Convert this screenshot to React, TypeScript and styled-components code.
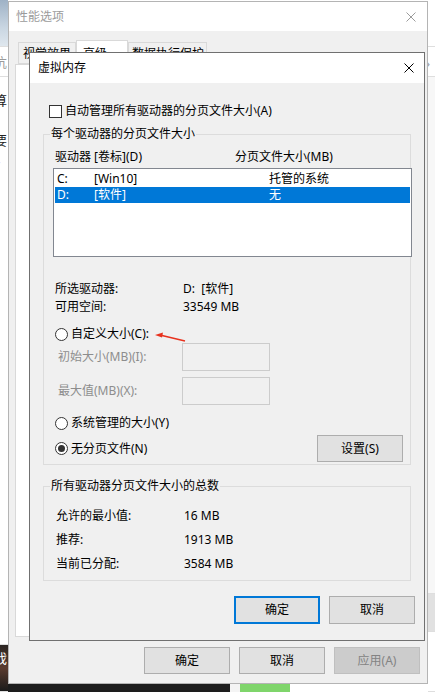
import styled, { createGlobalStyle } from "styled-components";

const GlobalStyle = createGlobalStyle`
  html, body {
    margin: 0;
    padding: 0;
    background: #ffffff;
  }
  body {
    font-family: "Noto Sans", "Noto Sans CJK SC", sans-serif;
    font-size: 12px;
    line-height: 16px;
    color: #000;
  }
  * {
    box-sizing: border-box;
  }
`;

const Desktop = styled.div`
  position: relative;
  width: 435px;
  height: 692px;
  overflow: hidden;
  display: flex;
`;

/* background apps peeking out around the windows */
const LeftStrip = styled.div`
  width: 8px;
  display: flex;
  flex-direction: column;
  overflow: hidden;
`;

const Middle = styled.div`
  flex: 1;
  display: flex;
  flex-direction: column;
`;

const RightStrip = styled.div`
  width: 7px;
  display: flex;
  flex-direction: column;
  overflow: hidden;
  background: #ffffff;
`;

const Segment = styled.div<{ $h?: number; $bg: string }>`
  height: ${(p) => (p.$h ? `${p.$h}px` : "auto")};
  flex: ${(p) => (p.$h ? "none" : 1)};
  background: ${(p) => p.$bg};
  border-bottom: 1px solid #dedede;
  position: relative;
`;

const Fragment = styled.div<{ $color?: string }>`
  margin-left: -6px;
  color: ${(p) => p.$color || "#222"};
  font-size: 13px;
  line-height: 14px;
  white-space: nowrap;
`;

const Chevron = styled.div`
  margin: 8px 0 0 -2px;
  color: #9a9a9a;
  font-size: 13px;
`;

const Taskbar = styled.div`
  margin-top: auto;
  height: 9px;
  display: flex;
`;

const Swatch = styled.div<{ $w?: number; $bg: string }>`
  width: ${(p) => (p.$w ? `${p.$w}px` : "auto")};
  flex: ${(p) => (p.$w ? "none" : 1)};
  background: ${(p) => p.$bg};
`;

/* 性能选项 window */
const PerfWindow = styled.div`
  position: absolute;
  left: 8px;
  top: 1px;
  width: 420px;
  height: 683px;
  border: 1px solid #b4b4b4;
  background: #f0f0f0;
  display: flex;
  flex-direction: column;
`;

const TitleBar = styled.div<{ $h: number; $pl: number; $pr: number; $muted?: boolean }>`
  height: ${(p) => p.$h}px;
  flex: none;
  background: #ffffff;
  display: flex;
  align-items: center;
  justify-content: space-between;
  padding: 0 ${(p) => p.$pr}px 0 ${(p) => p.$pl}px;
  color: ${(p) => (p.$muted ? "#9b9b9b" : "#000")};
  font-size: 12px;
`;

const TabRow = styled.div`
  margin-top: 9px;
  height: 24px;
  padding-left: 9px;
  display: flex;
  align-items: flex-end;
  position: relative;
  z-index: 1;
`;

const Tab = styled.div<{ $w: number; $pl: number; $active?: boolean }>`
  width: ${(p) => p.$w}px;
  height: ${(p) => (p.$active ? 25 : 22)}px;
  margin-bottom: ${(p) => (p.$active ? -1 : 0)}px;
  padding: ${(p) => (p.$active ? 5 : 3)}px 0 0 ${(p) => p.$pl}px;
  background: ${(p) => (p.$active ? "#ffffff" : "#f0f0f0")};
  border: 1px solid #d9d9d9;
  border-bottom: ${(p) => (p.$active ? "none" : "1px solid #d9d9d9")};
  white-space: nowrap;
`;

const TabPanel = styled.div`
  flex: 1;
  margin: 0 6px;
  background: #ffffff;
  border: 1px solid #d9d9d9;
`;

const ButtonRow = styled.div<{ $mt: number; $pr: number; $pb: number; $gap: number }>`
  display: flex;
  justify-content: flex-end;
  gap: ${(p) => p.$gap}px;
  margin-top: ${(p) => p.$mt}px;
  padding: 0 ${(p) => p.$pr}px ${(p) => p.$pb}px 0;
`;

const Button = styled.div<{ $h?: number; $primary?: boolean; $disabled?: boolean }>`
  width: 86px;
  height: ${(p) => p.$h || 28}px;
  display: flex;
  align-items: center;
  justify-content: center;
  background: ${(p) => (p.$disabled ? "#cccccc" : "#e1e1e1")};
  border: ${(p) =>
    p.$primary ? "2px solid #0078d7" : p.$disabled ? "1px solid #bfbfbf" : "1px solid #adadad"};
  color: ${(p) => (p.$disabled ? "#838383" : "#000")};
`;

/* 虚拟内存 dialog */
const Dialog = styled.div`
  position: absolute;
  left: 29px;
  top: 52px;
  width: 396px;
  height: 589px;
  border: 1px solid #707070;
  background: #f0f0f0;
  display: flex;
  flex-direction: column;
  z-index: 2;
`;

const Body = styled.div`
  flex: 1;
  display: flex;
  flex-direction: column;
`;

const CheckRow = styled.label`
  display: flex;
  align-items: center;
  gap: 3px;
  margin: 20px 0 0 19px;
  height: 16px;
`;

const CheckBox = styled.span`
  width: 13px;
  height: 13px;
  border: 1px solid #333333;
  background: #ffffff;
`;

const GroupBox = styled.div<{ $mt: number; $pb: number }>`
  margin: ${(p) => p.$mt}px 0 0 13px;
  width: 368px;
  border: 1px solid #dcdcdc;
  padding: 0 7px ${(p) => p.$pb}px 9px;
  display: flex;
  flex-direction: column;
`;

const Legend = styled.div`
  margin: -9px 0 0 -3px;
  padding: 0 1px;
  width: fit-content;
  background: #f0f0f0;
  line-height: 16px;
  white-space: nowrap;
`;

const HeaderRow = styled.div`
  display: flex;
  margin-top: 7px;
  padding-left: 2px;
`;

const Col = styled.span<{ $w?: number }>`
  width: ${(p) => (p.$w ? `${p.$w}px` : "auto")};
  flex: none;
  white-space: nowrap;
`;

const ListBox = styled.div`
  margin-top: 3px;
  width: 359px;
  height: 89px;
  border: 1px solid #828790;
  background: #ffffff;
  padding: 2px 1px;
`;

const ListRow = styled.div<{ $selected?: boolean }>`
  display: flex;
  height: 16px;
  padding-left: 2px;
  background: ${(p) => (p.$selected ? "#0078d7" : "transparent")};
  color: ${(p) => (p.$selected ? "#ffffff" : "#000")};
`;

const InfoList = styled.div<{ $mt: number; $pl: number; $lh: number }>`
  margin-top: ${(p) => p.$mt}px;
  padding-left: ${(p) => p.$pl}px;
  display: flex;
  flex-direction: column;
  line-height: ${(p) => p.$lh}px;
`;

const InfoRow = styled.div`
  display: flex;
`;

const RadioRow = styled.div<{ $mt: number }>`
  display: flex;
  align-items: center;
  gap: 3px;
  margin-top: ${(p) => p.$mt}px;
  padding-left: 2px;
  height: 16px;
`;

const Radio = styled.span<{ $checked?: boolean }>`
  width: 13px;
  height: 13px;
  border-radius: 50%;
  border: 1px solid #333333;
  background: #ffffff;
  display: flex;
  align-items: center;
  justify-content: center;

  &::after {
    content: "";
    display: ${(p) => (p.$checked ? "block" : "none")};
    width: 7px;
    height: 7px;
    border-radius: 50%;
    background: #333333;
  }
`;

const FieldRow = styled.div<{ $mt: number }>`
  display: flex;
  align-items: center;
  margin-top: ${(p) => p.$mt}px;
  padding-left: 5px;
  color: #8d8d8d;
`;

const FieldLabel = styled.span`
  width: 124px;
  white-space: nowrap;
`;

const TextField = styled.div`
  width: 88px;
  height: 28px;
  border: 1px solid #cccccc;
  background: #f0f0f0;
`;

const LastRow = styled.div`
  display: flex;
  align-items: center;
  justify-content: space-between;
  margin-top: 4px;
  height: 27px;
`;

const ArrowMark = styled.svg`
  position: absolute;
  left: 150px;
  top: 328px;
  z-index: 3;
`;

const CloseIcon = ({ color }: { color: string }) => (
  <svg width="10" height="10" viewBox="0 0 10 10">
    <path d="M0.5 0.5 L9.5 9.5 M9.5 0.5 L0.5 9.5" stroke={color} strokeWidth="1" fill="none" />
  </svg>
);

const drives = [
  { letter: "C:", label: "[Win10]", size: "托管的系统", selected: false },
  { letter: "D:", label: "[软件]", size: "无", selected: true },
];

const totals = [
  { k: "允许的最小值:", v: "16 MB" },
  { k: "推荐:", v: "1913 MB" },
  { k: "当前已分配:", v: "3584 MB" },
];

export default function App() {
  return (
    <>
      <GlobalStyle />
      <Desktop>
        <LeftStrip>
          <Segment $h={47} $bg="linear-gradient(180deg, #9fb2c6, #c9d6e2 60%, #dfe7ee)" />
          <Segment $h={30} $bg="#ffffff">
            <Fragment $color="#9a9a9a" style={{ marginTop: 8 }}>沆</Fragment>
          </Segment>
          <Segment $bg="#ffffff">
            <Fragment style={{ marginTop: 16 }}>算</Fragment>
            <Fragment style={{ marginTop: 26 }}>要</Fragment>
            <Fragment $color="#d98a2b" style={{ marginTop: 14 }}>亻</Fragment>
            <Fragment $color="#d98a2b" style={{ marginTop: 106 }}>/</Fragment>
            <Fragment $color="#d98a2b" style={{ marginTop: 118 }}>/</Fragment>
          </Segment>
          <Segment $h={47} $bg="linear-gradient(180deg, #2b2623, #5a3b2e 50%, #1b1b1b)">
            <Fragment $color="#ffffff" style={{ marginTop: 6 }}>戏</Fragment>
          </Segment>
        </LeftStrip>
        <Middle>
          <Taskbar>
            <Swatch $w={222} $bg="#1d1d1d" />
            <Swatch $w={10} $bg="#f4f4f4" />
            <Swatch $w={50} $bg="#7fd56b" />
            <Swatch $bg="#ffffff" />
          </Taskbar>
        </Middle>
        <RightStrip>
          <Segment $h={47} $bg="#ffffff" />
          <Segment $h={30} $bg="#ffffff">
            <Chevron>›</Chevron>
          </Segment>
          <Segment $h={517} $bg="#f7f7f7" />
          <Segment $h={38} $bg="#e1e1e1" />
          <Segment $bg="#ffffff" />
        </RightStrip>

        <PerfWindow>
          <TitleBar $h={29} $pl={7} $pr={11} $muted>
            <span>性能选项</span>
            <CloseIcon color="#9b9b9b" />
          </TitleBar>
          <TabRow>
            <Tab $w={58} $pl={4}>视觉效果</Tab>
            <Tab $w={52} $pl={6} $active>高级</Tab>
            <Tab $w={79} $pl={3}>数据执行保护</Tab>
          </TabRow>
          <TabPanel />
          <ButtonRow $mt={10} $pr={7} $pb={9} $gap={9}>
            <Button $h={27}>确定</Button>
            <Button $h={27}>取消</Button>
            <Button $h={27} $disabled>应用(A)</Button>
          </ButtonRow>
        </PerfWindow>

        <Dialog>
          <TitleBar $h={30} $pl={8} $pr={10}>
            <span>虚拟内存</span>
            <CloseIcon color="#000" />
          </TitleBar>
          <Body>
            <CheckRow>
              <CheckBox />
              <span>自动管理所有驱动器的分页文件大小(A)</span>
            </CheckRow>

            <GroupBox $mt={15} $pb={2}>
              <Legend>每个驱动器的分页文件大小</Legend>
              <HeaderRow>
                <Col $w={180}>驱动器 [卷标](D)</Col>
                <Col>分页文件大小(MB)</Col>
              </HeaderRow>
              <ListBox>
                {drives.map((d) => (
                  <ListRow key={d.letter} $selected={d.selected}>
                    <Col $w={37}>{d.letter}</Col>
                    <Col $w={175}>{d.label}</Col>
                    <Col>{d.size}</Col>
                  </ListRow>
                ))}
              </ListBox>

              <InfoList $mt={23} $pl={2} $lh={18}>
                <InfoRow>
                  <Col $w={128}>所选驱动器:</Col>
                  <Col>D:&nbsp;&nbsp;[软件]</Col>
                </InfoRow>
                <InfoRow>
                  <Col $w={128}>可用空间:</Col>
                  <Col>33549 MB</Col>
                </InfoRow>
              </InfoList>

              <RadioRow $mt={10}>
                <Radio />
                <span>自定义大小(C):</span>
              </RadioRow>
              <FieldRow $mt={1}>
                <FieldLabel>初始大小(MB)(I):</FieldLabel>
                <TextField />
              </FieldRow>
              <FieldRow $mt={6}>
                <FieldLabel>最大值(MB)(X):</FieldLabel>
                <TextField />
              </FieldRow>

              <RadioRow $mt={10}>
                <Radio />
                <span>系统管理的大小(Y)</span>
              </RadioRow>
              <LastRow>
                <RadioRow $mt={0}>
                  <Radio $checked />
                  <span>无分页文件(N)</span>
                </RadioRow>
                <Button $h={27}>设置(S)</Button>
              </LastRow>
            </GroupBox>

            <GroupBox $mt={21} $pb={4}>
              <Legend>所有驱动器分页文件大小的总数</Legend>
              <InfoList $mt={10} $pl={3} $lh={24}>
                {totals.map((t) => (
                  <InfoRow key={t.k}>
                    <Col $w={128}>{t.k}</Col>
                    <Col>{t.v}</Col>
                  </InfoRow>
                ))}
              </InfoList>
            </GroupBox>

            <ButtonRow $mt={15} $pr={9} $pb={0} $gap={9}>
              <Button $primary>确定</Button>
              <Button>取消</Button>
            </ButtonRow>
          </Body>
        </Dialog>

        <ArrowMark width="40" height="18" viewBox="0 0 40 18">
          <polygon points="5,7 13,4.5 12,9.5" fill="#e8321e" />
          <path d="M12 7.5 L35 13" stroke="#e8321e" strokeWidth="1.6" fill="none" />
        </ArrowMark>
      </Desktop>
    </>
  );
}
